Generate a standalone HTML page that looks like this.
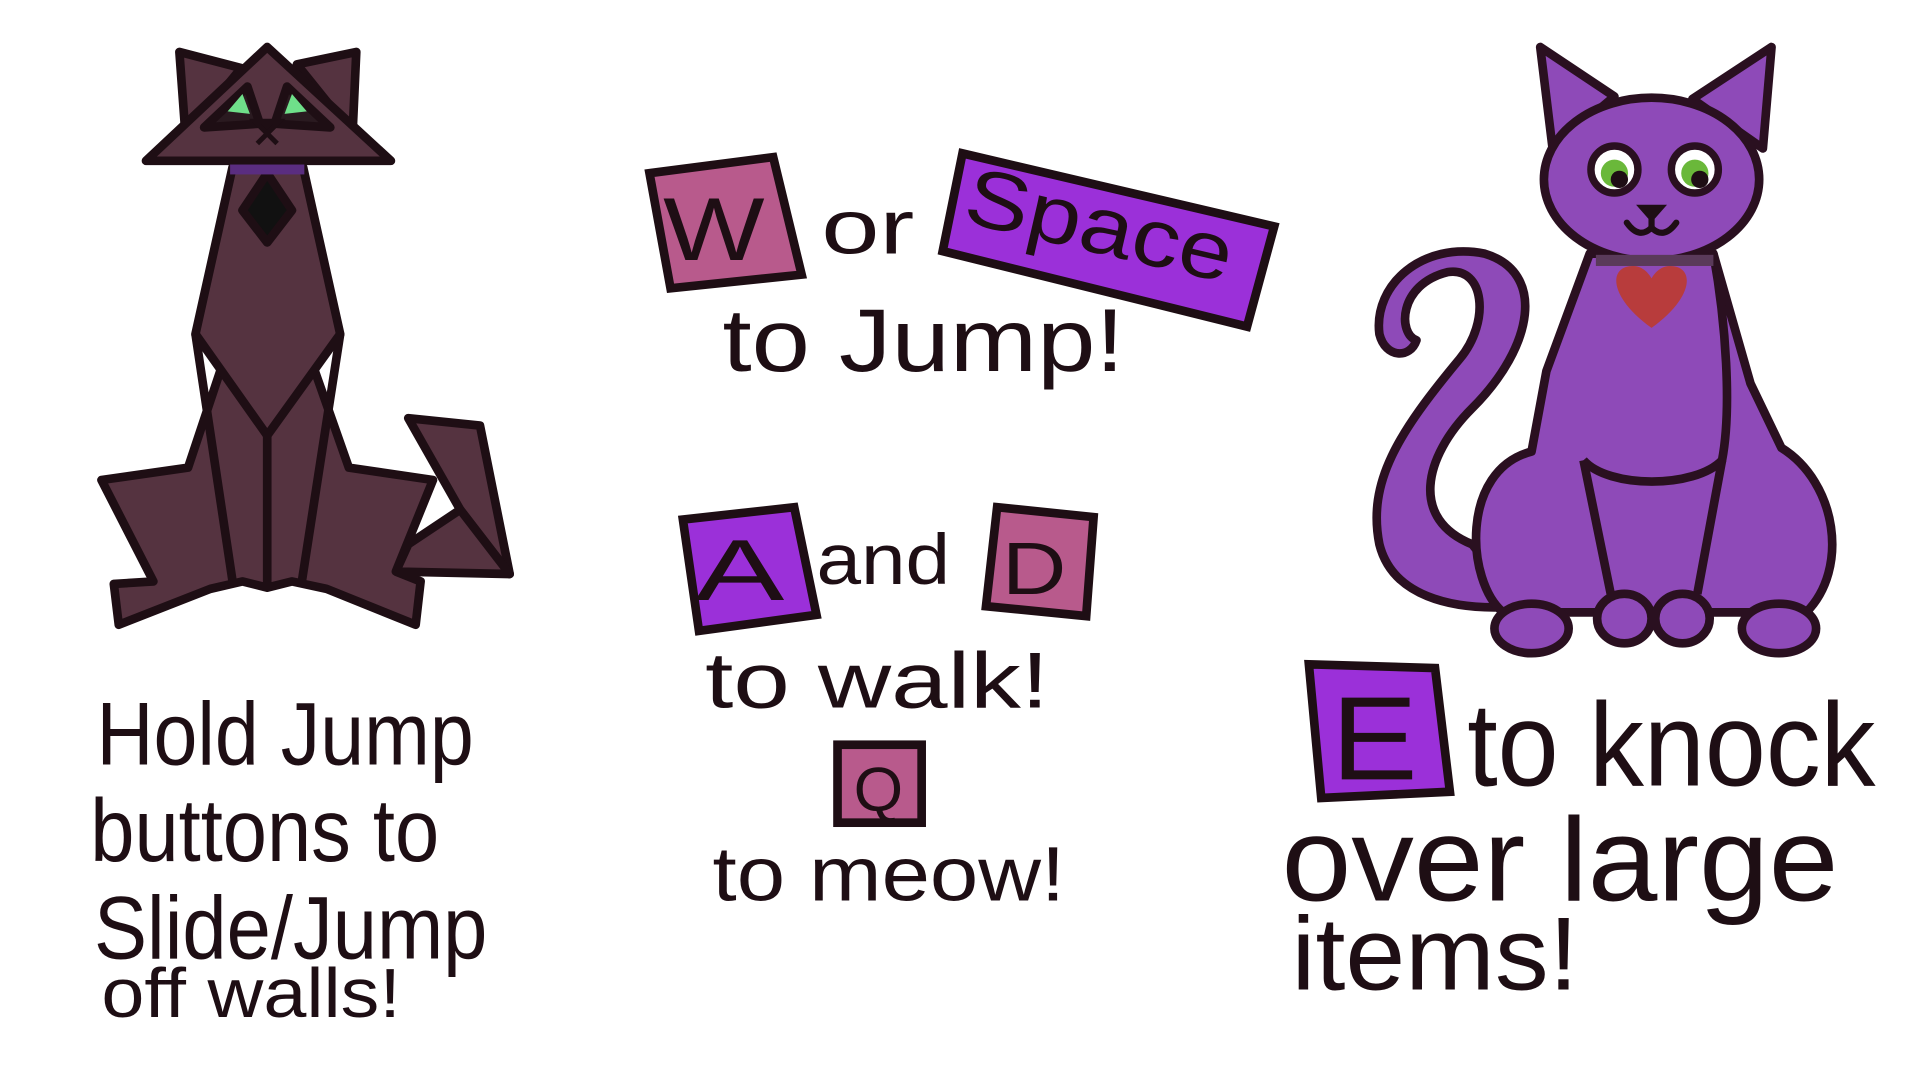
<!DOCTYPE html>
<html><head><meta charset="utf-8"><style>
html,body{margin:0;padding:0;background:#fff;width:1920px;height:1080px;overflow:hidden}
svg{display:block}
text{font-family:"Liberation Sans",sans-serif;fill:#1e0e14}
</style></head><body>
<svg width="1920" height="1080" viewBox="0 0 1552 873" preserveAspectRatio="none">
<g stroke="#1e0e14" stroke-width="7" stroke-linejoin="round" fill="#553340">
 <polygon points="330,338 388,344 412,464 372,412"/>
 <polygon points="320,462 412,464 372,412 330,440"/>
 <polygon points="82,388 152,378 188,270 216,352 244,270 282,378 350,388 320,462 340,470 336,505 264,476 236,470 216,475 196,470 170,476 96,505 92,472 124,470"/>
 <polygon points="188,135 245,135 275,270 216,352 158,270"/>
 <polyline fill="none" points="158,270 188,470"/>
 <polyline fill="none" points="275,270 244,470"/>
 <polyline fill="none" points="216,352 216,475"/>
 <polygon points="145,42 195,55 150,110"/>
 <polygon points="288,42 240,52 285,108"/>
 <polygon points="118,130 316,130 216,38"/>
 <polygon points="165,103 200,70 210,100" fill="#2a1a20"/>
 <polygon points="267,103 232,70 222,100" fill="#2a1a20"/>
 <polygon points="216,140 236,170 216,196 196,170" fill="#111"/>
</g>
<polygon points="184,90 196,76 202,92" fill="#6fe08a"/>
<polygon points="248,90 236,76 230,92" fill="#6fe08a"/>
<path d="M206,98 h20 l-10,10z M216,108 l-8,8 M216,108 l8,8" stroke="#1e0e14" stroke-width="4" fill="#1e0e14"/>
<rect x="186" y="133" width="60" height="8" fill="#5a2d80"/>

<g stroke="#2a1020" stroke-width="7" stroke-linejoin="round" fill="#8e4ab8">
 <path d="M1190,440 C1140,420 1150,370 1190,330 C1240,280 1250,220 1200,205 C1150,195 1110,230 1115,270 C1120,290 1140,290 1145,275 C1130,270 1130,230 1170,220 C1200,215 1205,260 1180,290 C1130,350 1105,390 1115,440 C1125,480 1170,495 1230,490 Z"/>
 <path d="M1285,205 L1250,300 L1238,365 C1180,380 1185,470 1215,495 L1460,495 C1495,460 1485,390 1440,362 L1415,310 L1385,205 Z"/>
 <path d="M1280,372 C1300,395 1370,395 1392,372 C1400,330 1395,260 1385,205" fill="none"/>
 <path d="M1280,372 L1302,480 M1392,372 L1372,480" fill="none"/>
 <path d="M1245,38 L1305,78 L1255,120 Z"/>
 <path d="M1432,38 L1368,80 L1425,120 Z"/>
 <ellipse cx="1335" cy="145" rx="87" ry="66"/>
 <ellipse cx="1238" cy="508" rx="30" ry="20"/>
 <ellipse cx="1438" cy="508" rx="30" ry="20"/>
 <ellipse cx="1313" cy="500" rx="22" ry="20"/>
 <ellipse cx="1360" cy="500" rx="22" ry="20"/>
</g>
<rect x="1290" y="206" width="95" height="9" fill="#5a3a5a"/>
<path d="M1335,265 C1300,240 1300,215 1320,215 C1330,215 1335,225 1335,225 C1335,225 1340,215 1350,215 C1370,215 1370,240 1335,265Z" fill="#b83c3c"/>
<g stroke="#2a1020" stroke-width="6">
 <circle cx="1305" cy="137" r="19" fill="#fff"/>
 <circle cx="1370" cy="137" r="19" fill="#fff"/>
</g>
<circle cx="1305" cy="140" r="11" fill="#6ab83a"/><circle cx="1370" cy="140" r="11" fill="#6ab83a"/>
<circle cx="1309" cy="145" r="7" fill="#1e0e14"/><circle cx="1374" cy="145" r="7" fill="#1e0e14"/>
<path d="M1328,168 h14 l-7,8z M1335,176 v8" stroke="#1e0e14" stroke-width="5" fill="#1e0e14" stroke-linecap="round"/>
<path d="M1315,180 q10,14 20,4 q10,10 20,-4" stroke="#1e0e14" stroke-width="5" fill="none" stroke-linecap="round"/>

<g stroke="#1e0e14" stroke-width="7">
 <polygon points="525,140 625,127 648,222 542,233" fill="#b85a8c"/>
 <polygon points="778,124 1030,183 1008,264 762,203" fill="#9b30d9"/>
 <polygon points="552,420 642,410 660,497 565,510" fill="#9b30d9"/>
 <polygon points="806,410 884,418 878,498 797,490" fill="#b85a8c"/>
 <rect x="677" y="602" width="68" height="63" fill="#b85a8c"/>
 <polygon points="1058,537 1160,540 1172,640 1068,645" fill="#9b30d9"/>
</g>
<g>
 <text x="536" y="210" font-size="72" textLength="82" lengthAdjust="spacingAndGlyphs">W</text>
 <text x="664" y="205" font-size="62" textLength="75" lengthAdjust="spacingAndGlyphs">or</text>
 <text x="776" y="205" font-size="66" textLength="220" lengthAdjust="spacingAndGlyphs" transform="rotate(13 890 195)">Space</text>
 <text x="584" y="300" font-size="72" textLength="325" lengthAdjust="spacingAndGlyphs">to Jump!</text>
 <text x="562" y="485" font-size="70" textLength="72" lengthAdjust="spacingAndGlyphs">A</text>
 <text x="660" y="472" font-size="58" textLength="108" lengthAdjust="spacingAndGlyphs">and</text>
 <text x="810" y="480" font-size="60" textLength="52" lengthAdjust="spacingAndGlyphs">D</text>
 <text x="570" y="572" font-size="64" textLength="278" lengthAdjust="spacingAndGlyphs">to walk!</text>
 <text x="690" y="655" font-size="50" textLength="40" lengthAdjust="spacingAndGlyphs">Q</text>
 <text x="576" y="728" font-size="62" textLength="285" lengthAdjust="spacingAndGlyphs">to meow!</text>
 <text x="1076" y="630" font-size="96" textLength="70" lengthAdjust="spacingAndGlyphs">E</text>
 <text x="1186" y="635" font-size="96" textLength="330" lengthAdjust="spacingAndGlyphs">to knock</text>
 <text x="1036" y="728" font-size="96" textLength="450" lengthAdjust="spacingAndGlyphs">over large</text>
 <text x="1044" y="800" font-size="84" textLength="232" lengthAdjust="spacingAndGlyphs">items!</text>
 <text x="78" y="618" font-size="72" textLength="305" lengthAdjust="spacingAndGlyphs">Hold Jump</text>
 <text x="73" y="696" font-size="72" textLength="282" lengthAdjust="spacingAndGlyphs">buttons to</text>
 <text x="76" y="775" font-size="72" textLength="318" lengthAdjust="spacingAndGlyphs">Slide/Jump</text>
 <text x="82" y="822" font-size="56" textLength="242" lengthAdjust="spacingAndGlyphs">off walls!</text>
</g>
</svg>
</body></html>
